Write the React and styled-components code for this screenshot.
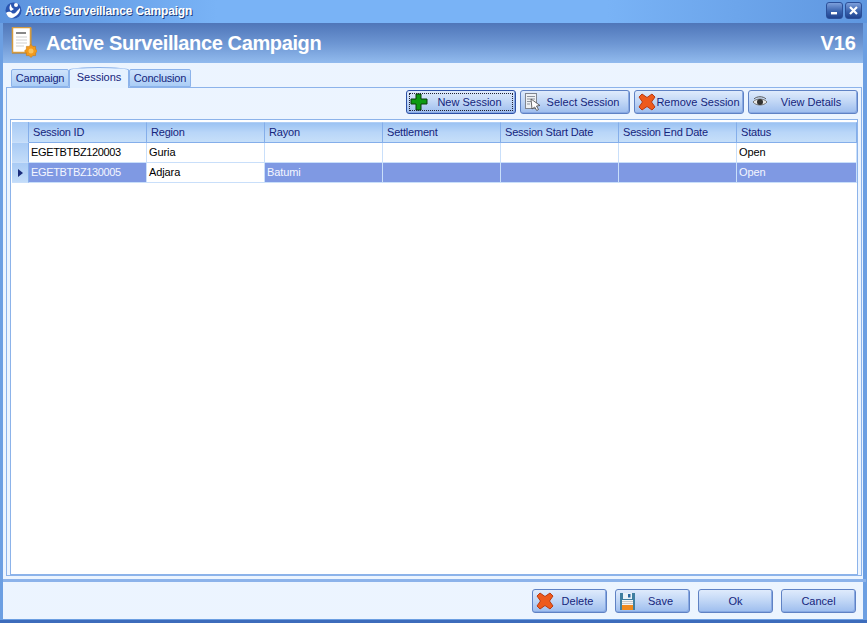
import React from "react";
import styled, { createGlobalStyle } from "styled-components";

const Global = createGlobalStyle`
  html, body { margin: 0; padding: 0; background: #fff; }
  #root { width: 867px; height: 623px; overflow: hidden; }
  * { box-sizing: border-box; }
`;

const dots = `
  background-color: #e3f0fe;
  background-image: radial-gradient(circle at 1px 1px, #edf5ff 0.7px, transparent 0.8px);
  background-size: 2px 2px;
`;

const Window = styled.div`
  width: 867px;
  height: 623px;
  display: flex;
  flex-direction: column;
  font-family: "Liberation Sans", Arial, sans-serif;
  font-size: 11px;
  background: #6c9fe2;
  border-bottom: 3px solid #3d6cbb;
  padding: 0 4px 1px 3px;
`;

const TitleBar = styled.div`
  height: 23px;
  margin: 0 -4px 0 -3px;
  padding: 0 5px 2px 5px;
  display: flex;
  align-items: center;
  gap: 3px;
  color: #fff;
  font-size: 12px;
  letter-spacing: -0.15px;
  font-weight: bold;
  background: linear-gradient(90deg, #5b92dd 0%, #79b3f6 25%, #79b3f6 70%, #5f97e0 100%);
  text-shadow: 1px 1px 0 #20407f;
`;

const TitleText = styled.span`
  flex: 1;
`;

const WinButtons = styled.div`
  display: flex;
  gap: 2px;
`;

const WinButton = styled.div`
  width: 17px;
  height: 17px;
  border-radius: 3px;
  background: linear-gradient(180deg, #7d9fdb 0%, #3a63ae 55%, #1f4390 100%);
  border: 1px solid #2c5099;
  display: flex;
  align-items: center;
  justify-content: center;
`;

const Header = styled.div`
  height: 40px;
  display: flex;
  align-items: center;
  justify-content: space-between;
  padding: 0 7px 0 8px;
  background: linear-gradient(180deg, #4f76b9 0%, #6c95d2 50%, #92bbee 100%);
  color: #fff;
  font-weight: bold;
`;

const HeaderLeft = styled.div`
  display: flex;
  align-items: center;
  gap: 9px;
`;

const HeaderTitle = styled.span`
  font-size: 20px;
  letter-spacing: -0.37px;
`;

const Version = styled.span`
  font-size: 20px;
`;

const Content = styled.div`
  flex: 1;
  display: flex;
  flex-direction: column;
  ${dots}
  padding: 3px 0 0 3px;
  min-height: 0;
`;

const TabStrip = styled.div`
  height: 21px;
  display: flex;
  align-items: flex-end;
  padding-left: 5px;
  position: relative;
  z-index: 1;
`;

const Tab = styled.div`
  height: ${(p) => (p.$active ? "21px" : "18px")};
  width: ${(p) => p.$w}px;
  margin-bottom: ${(p) => (p.$active ? "-1px" : "0")};
  display: flex;
  align-items: ${(p) => (p.$active ? "flex-start" : "center")};
  justify-content: center;
  padding-top: ${(p) => (p.$active ? "3px" : "0")};
  color: #15257c;
  letter-spacing: ${(p) => (p.$active ? "0" : "-0.2px")};
  border: 1px solid #8cb3ea;
  border-bottom: ${(p) => (p.$active ? "none" : "1px solid #8cb3ea")};
  border-radius: ${(p) => (p.$active ? "50% 50% 0 0 / 3px 3px 0 0" : "2px 2px 0 0")};
  background: ${(p) => (p.$active ? "#e6f2ff" : "linear-gradient(180deg,#cfe3fb 0%,#aacdf6 100%)")};
`;

const Panel = styled.div`
  height: 489px;
  border: 1px solid #8cb3ea;
  margin-right: 1px;
  padding: 2px 3px 0 3px;
  display: flex;
  flex-direction: column;
`;

const Toolbar = styled.div`
  height: 24px;
  display: flex;
  justify-content: flex-end;
  gap: 4px;
`;

const Button = styled.div`
  width: ${(p) => p.$w}px;
  height: 24px;
  position: relative;
  display: flex;
  align-items: center;
  justify-content: center;
  color: #15257c;
  padding-left: ${(p) => p.$pad || 0}px;
  padding-bottom: 1px;
  border: 1px solid ${(p) => (p.$focus ? "#2b50a6" : "#5f82c4")};
  border-radius: 3px;
  background: linear-gradient(180deg, #dfebfc 0%, #c3d8f6 45%, #9dbdee 100%);
  box-shadow: inset -1px -1px 0 #88a9e3;
`;

const FocusRing = styled.span`
  position: absolute;
  inset: 2px;
  border: 1px dotted #223;
`;

const IconSlot = styled.span`
  position: absolute;
  left: 3px;
  top: 2px;
  width: 18px;
  height: 18px;
  display: flex;
`;

const Grid = styled.div`
  margin-top: 5px;
  flex: 1;
  background: #fff;
  border: 1px solid #8cb3ea;
  padding: 2px 1px 0 1px;
`;

const Row = styled.div`
  display: grid;
  grid-template-columns: 17px repeat(6, 118px) 120px;
  height: ${(p) => p.$h}px;
`;

const HeadCell = styled.div`
  display: flex;
  align-items: center;
  padding: 0 0 2px 4px;
  letter-spacing: -0.2px;
  color: #15257c;
  background: linear-gradient(180deg, #9cc3f3 0%, #b9d6f8 50%, #c6dff9 100%);
  border-right: 1px solid #84aeea;
  border-bottom: 1px solid #84aeea;
  border-top: 1px solid #b0cef5;
`;

const Indicator = styled.div`
  display: flex;
  align-items: center;
  justify-content: center;
  background: linear-gradient(180deg, #a9cbf5 0%, #c3dcf9 100%);
  border-right: 1px solid #84aeea;
  border-bottom: 1px solid #c9dffa;
`;

const Cell = styled.div`
  display: flex;
  align-items: center;
  padding: 0 0 2px 2px;
  white-space: nowrap;
  letter-spacing: -0.1px;
  color: ${(p) => (p.$sel ? "#f4f6ff" : "#000")};
  background: ${(p) => (p.$sel ? "#7f99e3" : "#fff")};
  border-right: 1px solid #c9dffa;
  border-bottom: 1px solid #c9dffa;
`;

const CodeText = styled.span`
  letter-spacing: -0.35px;
`;

const Footer = styled.div`
  flex: 1;
  display: flex;
  justify-content: flex-end;
  align-items: flex-start;
  gap: 8px;
  margin: 3px -3px 0 -3px;
  border-top: 3px solid #8cb3ea;
  padding: 7px 10px 0 0;
`;

const Close = () => (
  <svg width="9" height="9" viewBox="0 0 9 9"><path d="M1 1l7 7M8 1L1 8" stroke="#fff" strokeWidth="2.2" /></svg>
);
const Min = () => (
  <svg width="9" height="9" viewBox="0 0 9 9"><rect x="1" y="6" width="6" height="2.4" fill="#fff" /></svg>
);
const Logo = () => (
  <svg width="17" height="17" viewBox="0 0 17 17">
    <circle cx="8.500" cy="8.500" r="8" fill="#2a55b0" />
    <circle cx="11" cy="3" r="2" fill="#fff" />
    <path d="M1 11c3-2 5-1 6 0s3 1 5-2l3-3c1 4-4 9-8 10-3 0-5-2-6-5zM6 2c0 3 1 4 3 5l-3 2C4 8 4 4 6 2z" fill="#fff" />
  </svg>
);
const sealTeeth = Array.from({ length: 16 }, (_, i) => {
  const a = (i * Math.PI) / 8;
  const r = i % 2 ? 5 : 6.5;
  return `${(20 + r * Math.cos(a)).toFixed(1)},${(24 + r * Math.sin(a)).toFixed(1)}`;
}).join(" ");
const DocIcon = () => (
  <svg width="26" height="32" viewBox="0 0 26 32">
    <rect x="1" y="1" width="20" height="26" fill="#8d8d8d" />
    <rect x="1.500" y="0.500" width="18" height="25" fill="#fff" stroke="#d59b3e" strokeWidth="1.5" />
    <rect x="5" y="5" width="10" height="2" fill="#888" />
    <path d="M5 10h11M5 13h11M5 16h11M5 19h8" stroke="#cfcfcf" strokeWidth="1" />
    <polygon points={sealTeeth} fill="#f39a1c" stroke="#c7780f" strokeWidth="0.6" />
    <circle cx="20" cy="24" r="2.500" fill="#fbc35c" />
  </svg>
);
const Plus = () => (
  <svg width="18" height="18" viewBox="0 0 18 18">
    <path d="M6 1h5v5h6v5h-6v6H6v-6H1V6h5z" fill="#0d9b13" stroke="#0a3d0a" strokeWidth="1" />
  </svg>
);
const Cross = () => (
  <svg width="18" height="18" viewBox="0 0 18 18">
    <path d="M4 1l5 3.500L14 1l3 3-3.500 5 3.500 5-3 3-5-3.500L4 17l-3-3 3.500-5L1 4z" fill="#ee5a1c" stroke="#b93a12" strokeWidth="1" strokeLinejoin="round" />
  </svg>
);
const Select = () => (
  <svg width="18" height="18" viewBox="0 0 18 18">
    <rect x="1.500" y="0.500" width="11" height="15" fill="#eef1f4" stroke="#7f858f" />
    <path d="M3 3.500h8M3 6h8M3 8.500h4M3 11h3" stroke="#8f959e" />
    <path d="M7 6l9 6.500-3.500.5 2 3.500-1.800 1-2-3.500L8 16z" fill="#fff" stroke="#444" strokeWidth="0.8" />
  </svg>
);
const Eye = () => (
  <svg width="18" height="18" viewBox="0 0 18 18">
    <path d="M1 9c3-4 11-4 14 0-3 4-11 4-14 0z" fill="#e8e8e8" stroke="#777" />
    <circle cx="8" cy="9" r="3" fill="#333" />
    <path d="M2 6c3-3 9-3 12 0" stroke="#555" fill="none" />
  </svg>
);
const Floppy = () => (
  <svg width="18" height="20" viewBox="0 0 18 20">
    <rect x="1" y="1" width="15" height="17" fill="#3f7fa0" />
    <rect x="4" y="1" width="9" height="6" fill="#eaf3f8" />
    <rect x="9" y="2" width="2.500" height="3.500" fill="#2d6a9f" />
    <rect x="3" y="8" width="11" height="5" fill="#f4f4f4" />
    <path d="M3 9.500h11M3 11.500h11" stroke="#c8c8c8" />
    <rect x="3" y="13" width="11" height="5" fill="#f08a1e" />
  </svg>
);
const Arrow = () => (
  <svg width="5" height="8" viewBox="0 0 5 8"><path d="M0 0l5 4-5 4z" fill="#1a2d7c" /></svg>
);

const columns = ["Session ID", "Region", "Rayon", "Settlement", "Session Start Date", "Session End Date", "Status"];

export default function App() {
  return (
    <Window>
      <Global />
      <TitleBar>
        <Logo />
        <TitleText>Active Surveillance Campaign</TitleText>
        <WinButtons>
          <WinButton><Min /></WinButton>
          <WinButton><Close /></WinButton>
        </WinButtons>
      </TitleBar>
      <Header>
        <HeaderLeft>
          <DocIcon />
          <HeaderTitle>Active Surveillance Campaign</HeaderTitle>
        </HeaderLeft>
        <Version>V16</Version>
      </Header>
      <Content>
        <TabStrip>
          <Tab $w={58}>Campaign</Tab>
          <Tab $active $w={60}>Sessions</Tab>
          <Tab $w={62}>Conclusion</Tab>
        </TabStrip>
        <Panel>
          <Toolbar>
            <Button $w={110} $focus $pad={17}>
              <IconSlot><Plus /></IconSlot>
              <FocusRing />
              New Session
            </Button>
            <Button $w={110} $pad={16}>
              <IconSlot><Select /></IconSlot>
              Select Session
            </Button>
            <Button $w={110} $pad={18}>
              <IconSlot><Cross /></IconSlot>
              Remove Session
            </Button>
            <Button $w={110} $pad={16}>
              <IconSlot><Eye /></IconSlot>
              View Details
            </Button>
          </Toolbar>
          <Grid>
            <Row $h={21}>
              <Indicator />
              {columns.map((c) => <HeadCell key={c}>{c}</HeadCell>)}
            </Row>
            <Row $h={20}>
              <Indicator />
              <Cell><CodeText>EGETBTBZ120003</CodeText></Cell>
              <Cell>Guria</Cell>
              <Cell />
              <Cell />
              <Cell />
              <Cell />
              <Cell>Open</Cell>
            </Row>
            <Row $h={20}>
              <Indicator><Arrow /></Indicator>
              <Cell $sel><CodeText>EGETBTBZ130005</CodeText></Cell>
              <Cell>Adjara</Cell>
              <Cell $sel>Batumi</Cell>
              <Cell $sel />
              <Cell $sel />
              <Cell $sel />
              <Cell $sel>Open</Cell>
            </Row>
          </Grid>
        </Panel>
        <Footer>
          <Button $w={75} $pad={16}>
            <IconSlot><Cross /></IconSlot>
            Delete
          </Button>
          <Button $w={75} $pad={16}>
            <IconSlot><Floppy /></IconSlot>
            Save
          </Button>
          <Button $w={75}>Ok</Button>
          <Button $w={75}>Cancel</Button>
        </Footer>
      </Content>
    </Window>
  );
}
